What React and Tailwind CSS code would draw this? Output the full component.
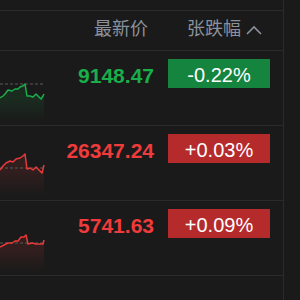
import React from 'react';

const rows = [
    {
        price: '9148.47',
        change: '-0.22%',
        up: false,
        base: 33,
        points: [[0, 47], [3, 45], [5, 43], [8, 39], [12, 40], [15, 38], [18, 38], [20, 36], [23, 35], [25, 33], [27, 45], [30, 45], [33, 46], [36, 43], [39, 46], [41, 48], [43, 45], [44, 43]],
    },
    {
        price: '26347.24',
        change: '+0.03%',
        up: true,
        base: 42,
        points: [[0, 44], [3, 40], [6, 37], [10, 35], [13, 36], [16, 33], [20, 32], [23, 30], [25, 28], [27, 43], [30, 42], [33, 44], [36, 41], [39, 44], [42, 47], [44, 39]],
    },
    {
        price: '5741.63',
        change: '+0.09%',
        up: true,
        base: 42,
        points: [[0, 46], [4, 44], [8, 42], [12, 42], [15, 40], [18, 40], [21, 36], [24, 36], [26, 34], [28, 43], [32, 42], [36, 43], [40, 43], [43, 43], [44, 39]],
    },
];

const Spark = ({ points, up, base, id }) => {
    const color = up ? '#e8393a' : '#1aae4b';
    const line = points.map(p => p.join(',')).join(' ');
    const area = `0,75 ${line} 44,75`;
    return (
        <svg width="48" height="74" viewBox="0 0 48 74" className="block">
            <defs>
                <linearGradient id={id} x1="0" y1="0" x2="0" y2="1">
                    <stop offset="0.35" stopColor={color} stopOpacity="0.12" />
                    <stop offset="0.9" stopColor={color} stopOpacity="0" />
                </linearGradient>
            </defs>
            <polygon points={area} fill={`url(#${id})`} />
            <line x1="0" y1={base} x2="44" y2={base} stroke="#5a5a5a" strokeWidth="1" strokeDasharray="3 2" />
            <polyline points={line} fill="none" stroke={color} strokeWidth="1.5" strokeLinejoin="round" />
        </svg>
    );
};

export default function App() {
    return (
        <div
            className="w-[300px] h-[300px] bg-[#1a1a1a] flex overflow-hidden"
            style={{ fontFamily: '"Liberation Sans", "Noto Sans CJK SC", sans-serif' }}
        >
            <div className="w-[284px] border-r border-[#2b2b2b]">
                <div className="mt-[10px] border-t border-[#2b2b2b]">
                    {/* Header */}
                    <div className="h-[40px] border-b border-[#2b2b2b] flex items-center pb-[3px] text-[18px] text-[#8a919c]">
                        <div className="w-[148px] text-right">最新价</div>
                        <div className="ml-[39px] flex items-center">
                            <span>张跌幅</span>
                            <svg width="16" height="10" viewBox="0 0 16 10" className="ml-[5px] mt-[1px]">
                                <polyline points="1,9 8,2 15,9" fill="none" stroke="#8a919c" strokeWidth="1.6" />
                            </svg>
                        </div>
                    </div>

                    {/* Rows */}
                    {rows.map((r, i) => (
                        <div key={i} className="h-[75px] border-b border-[#2b2b2b] flex">
                            <div className="w-[48px]">
                                <Spark points={r.points} up={r.up} base={r.base} id={`g${i}`} />
                            </div>
                            <div
                                className={`w-[106px] text-right pt-[10px] text-[21px] font-bold leading-[29px] ${r.up ? 'text-[#ef3b3b]' : 'text-[#1aae4b]'}`}
                            >
                                {r.price}
                            </div>
                            <div className="pl-[14px] pt-[8px]">
                                <div
                                    className={`w-[102px] h-[29px] flex items-center justify-center pt-[2px] text-[20px] text-white ${r.up ? 'bg-[#b52b2c]' : 'bg-[#15843e]'}`}
                                >
                                    {r.change}
                                </div>
                            </div>
                        </div>
                    ))}
                </div>
            </div>
        </div>
    );
}
